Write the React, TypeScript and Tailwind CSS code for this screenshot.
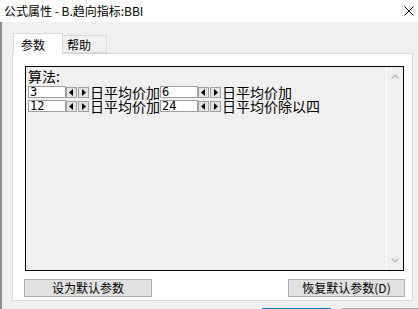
import React from 'react'

const cjk = { fontFamily: '"Noto Sans CJK SC", "Noto Sans", sans-serif' }
const ui = { fontFamily: '"Noto Sans CJK SC", "Liberation Sans", sans-serif' }

function Spin() {
  return (
    <div className="flex h-[12px] w-[24px] shrink-0 items-center gap-[1px]">
      {['l', 'r'].map((d) => (
        <div key={d} className="flex h-[11px] w-[11px] items-center justify-center border border-[#a0a0a0] bg-[#e3e3e3]">
          <svg width="5" height="7" viewBox="0 0 5 7">
            {d === 'l' ? <path d="M4 0 L4 7 L0 3.5 Z" fill="#000" /> : <path d="M1 0 L1 7 L5 3.5 Z" fill="#000" />}
          </svg>
        </div>
      ))}
    </div>
  )
}

function Field({ value }: { value: string }) {
  return (
    <div
      className="flex h-[12px] w-[38px] shrink-0 items-center border border-[#a0a0a0] bg-white pl-[1px] text-[12px] leading-none text-black"
      style={{ fontFamily: '"DejaVu Sans Mono", monospace' }}
    >
      {value}
    </div>
  )
}

function Row({ a, b, tail }: { a: string; b: string; tail: string }) {
  return (
    <div className="flex h-[14px] items-center">
      <Field value={a} />
      <Spin />
      <span className="w-[70px] shrink-0 text-[14px] leading-[14px] text-black" style={cjk}>日平均价加</span>
      <Field value={b} />
      <Spin />
      <span className="shrink-0 text-[14px] leading-[14px] text-black" style={cjk}>{tail}</span>
    </div>
  )
}

export default function App() {
  return (
    <div className="relative h-[309px] w-[418px] overflow-hidden bg-[#f0f0f0]" style={ui}>
      <div className="flex h-[22px] items-center justify-between bg-white pl-[4px] pr-[4px]">
        <span className="text-[12px] text-black">公式属性 - B.趋向指标:BBI</span>
        <svg width="10" height="10" viewBox="0 0 10 10">
          <path d="M0.5 0.5 L9.5 9.5 M9.5 0.5 L0.5 9.5" stroke="#000" strokeWidth="1" />
        </svg>
      </div>
      <div className="h-[287px] border-l-2 border-[#8c8c8c]">
        <div className="flex items-end pl-[11px] pt-[11px]">
          <div className="relative z-10 -mb-px flex h-[21px] w-[50px] items-start border border-b-0 border-[#d9d9d9] bg-white pl-[7px] pt-[2px] text-[12px] text-black">
            参数
          </div>
          <div className="flex h-[18px] w-[44px] items-start border border-l-0 border-[#d9d9d9] bg-[#f0f0f0] pl-[4px] pt-[0px] text-[12px] text-black">
            帮助
          </div>
        </div>
        <div className="ml-[10px] h-[248px] w-[401px] border border-[#d9d9d9] bg-white pl-[12px] pt-[12px]">
          <div className="flex h-[205px] w-[379px] border border-black bg-[#f0f0f0]">
            <div className="flex-1 pl-[2px] pt-[1px]">
              <div className="h-[17px] text-[14px] leading-[16px] text-black" style={cjk}>算法:</div>
              <Row a="3" b="6" tail="日平均价加" />
              <Row a="12" b="24" tail="日平均价除以四" />
            </div>
            <div className="flex w-[17px] flex-col items-center justify-between border-l border-white py-[7px]">
              <svg width="8" height="5" viewBox="0 0 8 5">
                <path d="M0.5 4.5 L4 1 L7.5 4.5" stroke="#bcbcbc" strokeWidth="1.5" fill="none" />
              </svg>
              <svg width="8" height="5" viewBox="0 0 8 5">
                <path d="M0.5 0.5 L4 4 L7.5 0.5" stroke="#bcbcbc" strokeWidth="1.5" fill="none" />
              </svg>
            </div>
          </div>
          <div className="mt-[8px] flex w-[379px] justify-between">
            <button className="-ml-[1px] h-[18px] w-[128px] border border-[#adadad] bg-[#e1e1e1] text-[12px] leading-none text-black" style={cjk}>
              设为默认参数
            </button>
            <button className="-mr-px h-[18px] w-[117px] border border-[#adadad] bg-[#e1e1e1] text-[12px] leading-none text-black" style={cjk}>
              恢复默认参数(D)
            </button>
          </div>
        </div>
        <div className="mt-[7px] flex">
          <div className="ml-[260px] h-[2px] w-[73px] bg-[#0078d7]" />
          <div className="ml-[11px] h-[2px] w-[80px] bg-[#adadad]" />
        </div>
      </div>
    </div>
  )
}
